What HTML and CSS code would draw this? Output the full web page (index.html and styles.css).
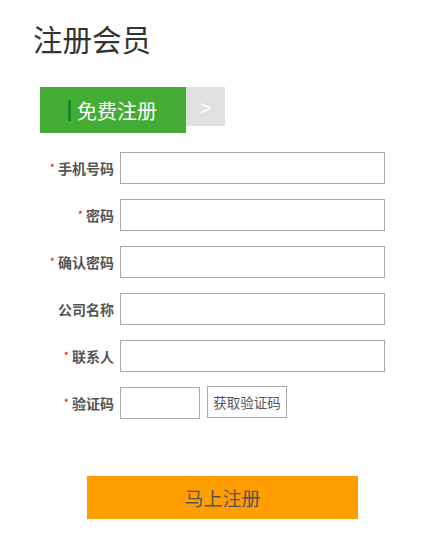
FILE: index.html
```html
<!DOCTYPE html>
<html lang="zh">
<head>
<meta charset="utf-8">
<title>注册会员</title>
<link rel="stylesheet" href="styles.css">
</head>
<body>
<div class="page">
  <h1 class="title">注册会员</h1>
  <div class="tabs">
    <div class="tab-active"><span class="tab-mark"></span>免费注册</div>
    <div class="tab-next">&gt;</div>
  </div>
  <form class="form">
    <div class="row">
      <label class="label"><span class="req">*</span>手机号码</label>
      <input class="input" type="text">
    </div>
    <div class="row">
      <label class="label"><span class="req">*</span>密码</label>
      <input class="input" type="password">
    </div>
    <div class="row">
      <label class="label"><span class="req">*</span>确认密码</label>
      <input class="input" type="password">
    </div>
    <div class="row">
      <label class="label">公司名称</label>
      <input class="input" type="text">
    </div>
    <div class="row">
      <label class="label"><span class="req">*</span>联系人</label>
      <input class="input" type="text">
    </div>
    <div class="row">
      <label class="label"><span class="req">*</span>验证码</label>
      <input class="input input-code" type="text">
      <button type="button" class="code-btn">获取验证码</button>
    </div>
    <div class="submit-wrap">
      <button type="button" class="submit">马上注册</button>
    </div>
  </form>
</div>
</body>
</html>
```

FILE: styles.css
```css
* { box-sizing: border-box; }
body {
  margin: 0;
  background: #fff;
  font-family: "Noto Sans CJK SC", "Microsoft YaHei", sans-serif;
  color: #333;
}
.page {
  padding: 18px 0 0 0;
}
.title {
  margin: 0 0 0 33px;
  font-size: 29.5px;
  line-height: 40px;
  font-weight: normal;
  color: #333;
}
.tabs {
  display: flex;
  align-items: flex-start;
  margin: 29px 0 0 40px;
}
.tab-active {
  width: 146px;
  height: 46px;
  background: #44ab34;
  color: #fff;
  font-size: 20px;
  display: flex;
  align-items: center;
  padding-left: 28px;
  gap: 6px;
}
.tab-mark {
  display: block;
  width: 3px;
  height: 21px;
  background: #0d8a2a;
}
.tab-next {
  width: 39px;
  height: 39px;
  background: #e0e0e0;
  color: #fff;
  font-family: "Liberation Sans", sans-serif;
  font-size: 20px;
  display: flex;
  align-items: center;
  justify-content: center;
  padding-top: 3px;
}
.form {
  margin-top: 19px;
}
.row {
  display: flex;
  align-items: center;
  height: 32px;
  margin-bottom: 15px;
}
.label {
  width: 114px;
  text-align: right;
  font-size: 14px;
  font-weight: bold;
  color: #555;
  margin-right: 6px;
}
.req {
  color: #f00;
  font-size: 11px;
  font-weight: normal;
  margin-right: 3px;
  position: relative;
  top: -2px;
}
.input {
  width: 265px;
  height: 32px;
  border: 1px solid #a9a9a9;
  background: #fff;
  padding: 0 6px;
  font-size: 14px;
  outline: none;
}
.input-code {
  width: 80px;
}
.code-btn {
  margin-left: 7px;
  width: 80px;
  height: 32px;
  position: relative;
  top: -1px;
  border: 1px solid #a9a9a9;
  background: #fff;
  color: #555;
  font-family: "Noto Sans CJK SC", sans-serif;
  font-size: 13.5px;
  padding: 0;
}
.submit-wrap {
  padding-left: 87px;
  padding-top: 42px;
}
.submit {
  width: 271px;
  height: 43px;
  border: none;
  background: #ff9e00;
  color: #555;
  font-family: "Noto Sans CJK SC", sans-serif;
  font-size: 19px;
  padding: 0;
}
```
